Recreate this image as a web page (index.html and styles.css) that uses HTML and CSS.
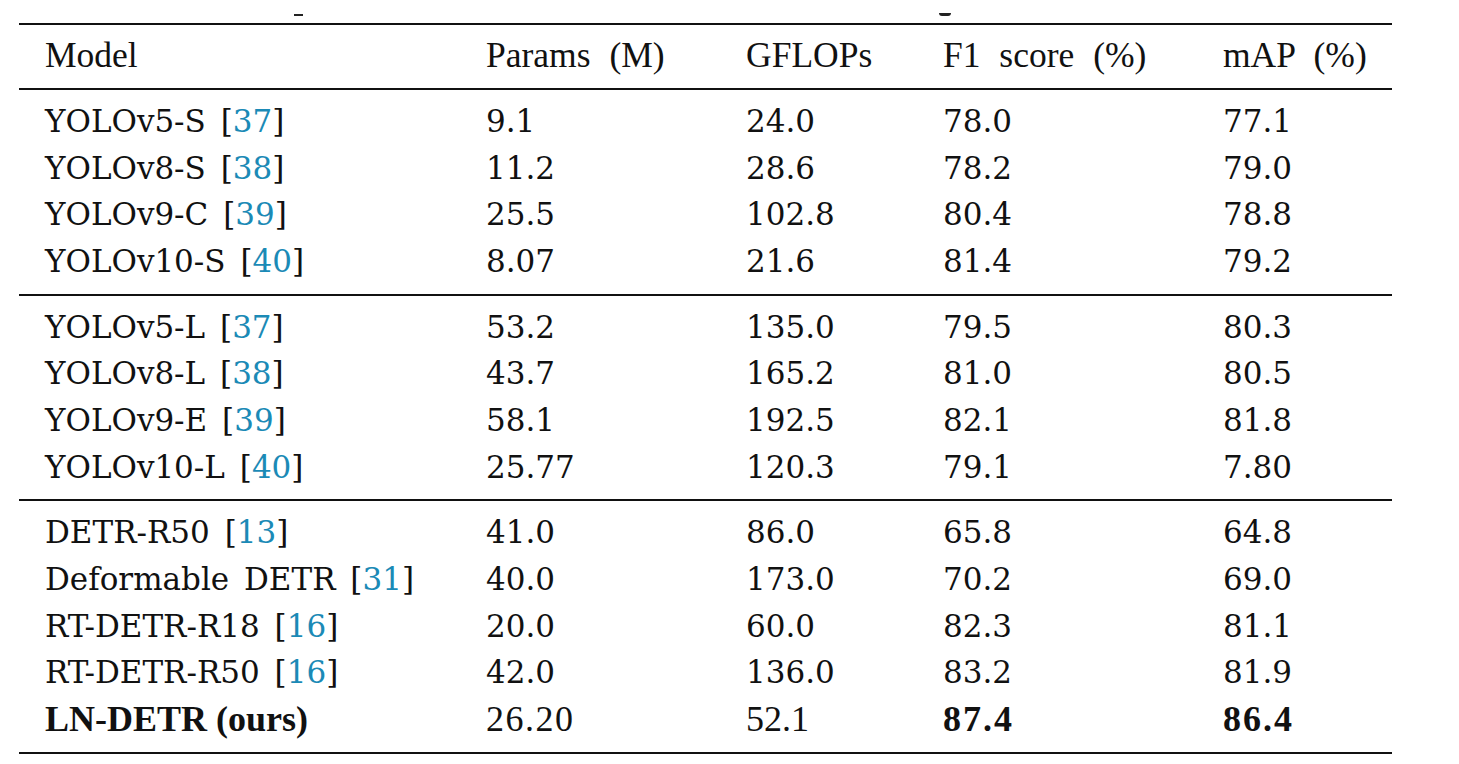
FILE: index.html
```html
<!DOCTYPE html>
<html lang="en">
<head>
<meta charset="utf-8">
<title>Model comparison table</title>
<link rel="stylesheet" href="styles.css">
</head>
<body>
<div class="page">
  <div class="caption-clip" aria-hidden="true">
    <span class="frag frag-a"></span>
    <span class="frag frag-b"></span>
  </div>
  <div class="table">
    <div class="row head">
      <div class="cell">Model</div>
      <div class="cell">Params (M)</div>
      <div class="cell">GFLOPs</div>
      <div class="cell">F1 score (%)</div>
      <div class="cell">mAP (%)</div>
    </div>

    <div class="section">
      <div class="row"><div class="cell">YOLOv5-S <span class="cite-wrap">[<span class="cite">37</span>]</span></div><div class="cell">9.1</div><div class="cell">24.0</div><div class="cell">78.0</div><div class="cell">77.1</div></div>
      <div class="row"><div class="cell">YOLOv8-S <span class="cite-wrap">[<span class="cite">38</span>]</span></div><div class="cell">11.2</div><div class="cell">28.6</div><div class="cell">78.2</div><div class="cell">79.0</div></div>
      <div class="row"><div class="cell">YOLOv9-C <span class="cite-wrap">[<span class="cite">39</span>]</span></div><div class="cell">25.5</div><div class="cell">102.8</div><div class="cell">80.4</div><div class="cell">78.8</div></div>
      <div class="row"><div class="cell">YOLOv10-S <span class="cite-wrap">[<span class="cite">40</span>]</span></div><div class="cell">8.07</div><div class="cell">21.6</div><div class="cell">81.4</div><div class="cell">79.2</div></div>
    </div>

    <div class="section">
      <div class="row"><div class="cell">YOLOv5-L <span class="cite-wrap">[<span class="cite">37</span>]</span></div><div class="cell">53.2</div><div class="cell">135.0</div><div class="cell">79.5</div><div class="cell">80.3</div></div>
      <div class="row"><div class="cell">YOLOv8-L <span class="cite-wrap">[<span class="cite">38</span>]</span></div><div class="cell">43.7</div><div class="cell">165.2</div><div class="cell">81.0</div><div class="cell">80.5</div></div>
      <div class="row"><div class="cell">YOLOv9-E <span class="cite-wrap">[<span class="cite">39</span>]</span></div><div class="cell">58.1</div><div class="cell">192.5</div><div class="cell">82.1</div><div class="cell">81.8</div></div>
      <div class="row"><div class="cell">YOLOv10-L <span class="cite-wrap">[<span class="cite">40</span>]</span></div><div class="cell">25.77</div><div class="cell">120.3</div><div class="cell">79.1</div><div class="cell">7.80</div></div>
    </div>

    <div class="section">
      <div class="row"><div class="cell">DETR-R50 <span class="cite-wrap">[<span class="cite">13</span>]</span></div><div class="cell">41.0</div><div class="cell">86.0</div><div class="cell">65.8</div><div class="cell">64.8</div></div>
      <div class="row"><div class="cell">Deformable DETR <span class="cite-wrap">[<span class="cite">31</span>]</span></div><div class="cell">40.0</div><div class="cell">173.0</div><div class="cell">70.2</div><div class="cell">69.0</div></div>
      <div class="row"><div class="cell">RT-DETR-R18 <span class="cite-wrap">[<span class="cite">16</span>]</span></div><div class="cell">20.0</div><div class="cell">60.0</div><div class="cell">82.3</div><div class="cell">81.1</div></div>
      <div class="row"><div class="cell">RT-DETR-R50 <span class="cite-wrap">[<span class="cite">16</span>]</span></div><div class="cell">42.0</div><div class="cell">136.0</div><div class="cell">83.2</div><div class="cell">81.9</div></div>
      <div class="row ours"><div class="cell bold name-bold">LN-DETR (ours)</div><div class="cell num-wide">26.20</div><div class="cell">52.1</div><div class="cell bold num-bold">87.4</div><div class="cell bold num-bold">86.4</div></div>
    </div>
  </div>
</div>
</body>
</html>
```

FILE: styles.css
```css
html, body {
  margin: 0;
  padding: 0;
  background: #ffffff;
}

.page {
  width: 1459px;
  height: 764px;
  overflow: hidden;
  color: #111111;
}

.caption-clip {
  display: flex;
  align-items: flex-start;
  height: 23px;
}

.frag {
  display: block;
  background: #222222;
}

.frag-a {
  margin-left: 294px;
  margin-top: 14px;
  width: 9px;
  height: 2px;
}

.frag-b {
  margin-left: 636px;
  margin-top: 13px;
  width: 12px;
  height: 3px;
  border-radius: 0 0 6px 6px;
}

.table {
  margin-left: 19px;
  width: 1373px;
  border-top: 2px solid #111111;
}

.row {
  display: grid;
  grid-template-columns: 441px 260px 197px 280px 1fr;
  padding-left: 26px;
  height: 46.67px;
  font-family: "DejaVu Serif", "Liberation Serif", serif;
  font-size: 31px;
  line-height: 46.67px;
  word-spacing: 5px;
  white-space: nowrap;
}

.cell {
  white-space: nowrap;
}

.head {
  height: 60px;
  padding-bottom: 3px;
  font-family: "Liberation Serif", "Times New Roman", serif;
  font-size: 35.5px;
  line-height: 60px;
  word-spacing: 10px;
  border-bottom: 2px solid #111111;
}

.section {
  padding-top: 8px;
  padding-bottom: 9px;
  border-bottom: 2px solid #111111;
}

.cite {
  color: #1b8ab6;
}

.ours .cell {
  font-family: "Liberation Serif", "Times New Roman", serif;
  font-size: 36px;
  word-spacing: 8px;
}

.ours .bold {
  font-weight: bold;
}

.ours .name-bold {
  word-spacing: 0;
}

.ours .num-wide {
  letter-spacing: 1.5px;
}

.ours .num-bold {
  letter-spacing: 2px;
}
```
